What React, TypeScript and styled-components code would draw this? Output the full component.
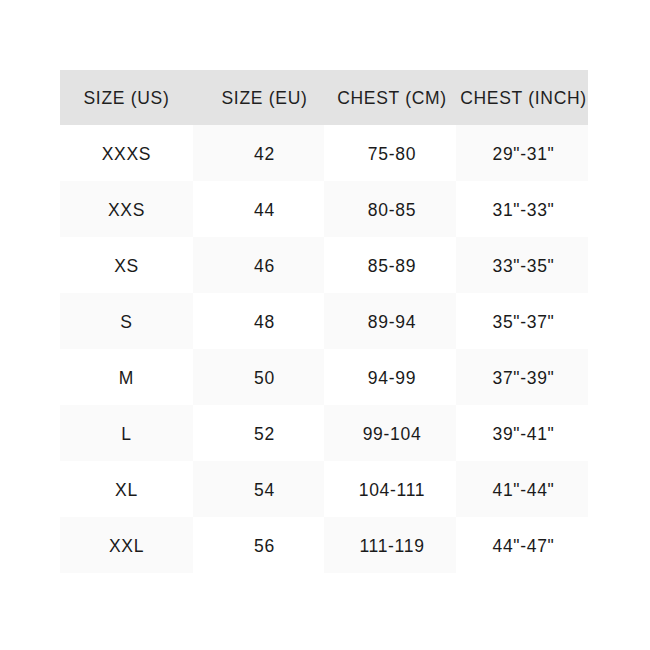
import React from "react";
import styled, { createGlobalStyle } from "styled-components";

const GlobalStyle = createGlobalStyle`
  html, body { margin: 0; padding: 0; background: #ffffff; }
  body { font-family: "Liberation Sans", Arial, sans-serif; }
`;

const Page = styled.div`
  padding: 70px 0 0 60px;
`;

const Table = styled.div`
  display: grid;
  grid-template-columns: 133px 131px 132px 132px;
  width: 528px;
`;

const offsets = [0, 12, 4, 3];

const HeaderCell = styled.div<{ $col: number }>`
  height: 55px;
  box-sizing: border-box;
  padding-left: ${(p) => offsets[p.$col]}px;
  padding-top: 1px;
  background: #e3e3e3;
  display: flex;
  align-items: center;
  justify-content: center;
  font-size: 17.5px;
  letter-spacing: 0.7px;
  color: #1f1f1f;
  white-space: nowrap;
`;

const Cell = styled.div<{ $shaded: boolean; $col: number }>`
  height: 56px;
  box-sizing: border-box;
  padding-left: ${(p) => offsets[p.$col]}px;
  padding-top: 2px;
  background: ${(p) => (p.$shaded ? "#fafafa" : "#ffffff")};
  display: flex;
  align-items: center;
  justify-content: center;
  font-size: 17.5px;
  letter-spacing: 0.7px;
  color: #1a1a1a;
`;

const headers = ["SIZE (US)", "SIZE (EU)", "CHEST (CM)", "CHEST (INCH)"];

const rows: string[][] = [
  ["XXXS", "42", "75-80", '29"-31"'],
  ["XXS", "44", "80-85", '31"-33"'],
  ["XS", "46", "85-89", '33"-35"'],
  ["S", "48", "89-94", '35"-37"'],
  ["M", "50", "94-99", '37"-39"'],
  ["L", "52", "99-104", '39"-41"'],
  ["XL", "54", "104-111", '41"-44"'],
  ["XXL", "56", "111-119", '44"-47"'],
];

export default function App() {
  return (
    <>
      <GlobalStyle />
      <Page>
        <Table>
          {headers.map((h, c) => (
            <HeaderCell key={h} $col={c}>
              {h}
            </HeaderCell>
          ))}
          {rows.map((row, r) =>
            row.map((v, c) => (
              <Cell key={`${r}-${c}`} $col={c} $shaded={(r + c) % 2 === 1}>
                {v}
              </Cell>
            ))
          )}
        </Table>
      </Page>
    </>
  );
}
